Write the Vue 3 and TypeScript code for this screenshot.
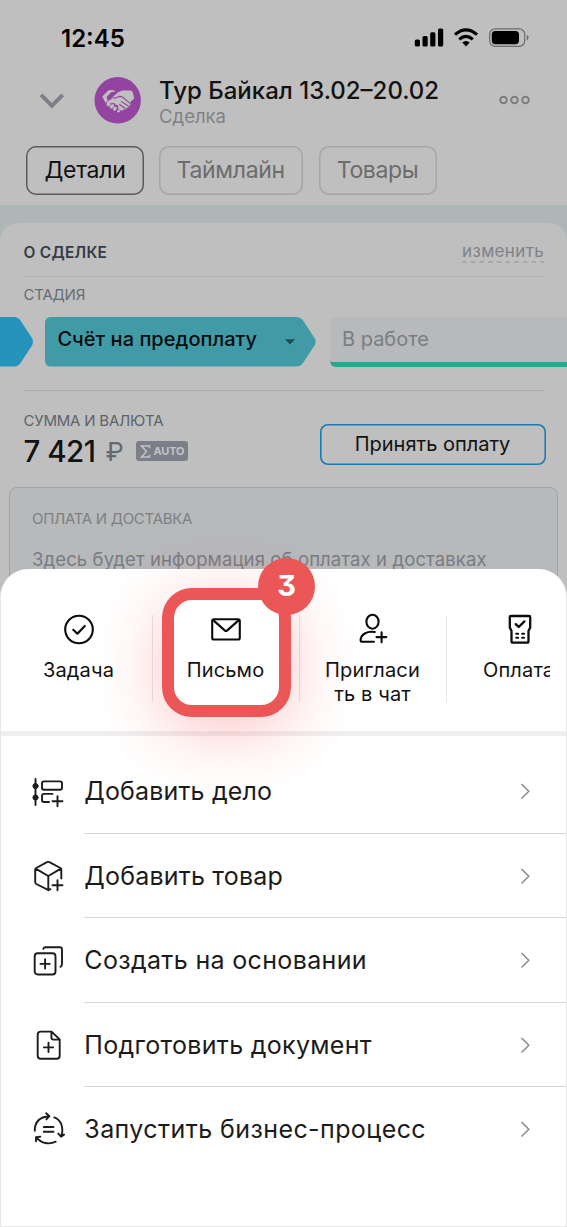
<script setup lang="ts">
interface Tab { label: string; cls: string }
interface Action { id: string; label: string; cls: string }
interface MenuRow { id: string; label: string; spacing: number }

const tabs: Tab[] = [
  { label: 'Детали', cls: 'tab-details' },
  { label: 'Таймлайн', cls: 'tab-timeline' },
  { label: 'Товары', cls: 'tab-goods' },
]

const actions: Action[] = [
  { id: 'task', label: 'Задача', cls: 'a-task' },
  { id: 'mail', label: 'Письмо', cls: 'a-mail' },
  { id: 'invite', label: 'Пригласи\nть в чат', cls: 'a-invite' },
  { id: 'pay', label: 'Оплата', cls: 'a-pay' },
]

const rows: MenuRow[] = [
  { id: 'todo', label: 'Добавить дело', spacing: 0.15 },
  { id: 'product', label: 'Добавить товар', spacing: 0.2 },
  { id: 'copy', label: 'Создать на основании', spacing: 0.34 },
  { id: 'doc', label: 'Подготовить документ', spacing: 0.3 },
  { id: 'process', label: 'Запустить бизнес-процесс', spacing: 0.42 },
]
</script>

<template>
  <div class="screen">
    <div class="status">
      <span class="time">12:45</span>
      <svg class="status-icons" width="118" height="24" viewBox="412 26 118 24">
        <g fill="#000">
          <rect x="414.8" y="39.5" width="5.2" height="7" rx="1.6" />
          <rect x="422.5" y="36" width="5.2" height="10.5" rx="1.6" />
          <rect x="430.2" y="32.3" width="5.2" height="14.2" rx="1.6" />
          <rect x="438" y="28.5" width="5.2" height="18" rx="1.6" />
          <path d="M466 46.4l-3.700-3.800q3.700-3.200 7.400 0z" />
        </g>
        <g fill="none" stroke="#000" stroke-width="3.100">
          <path d="M455 34.700q11-9.800 22 0" />
          <path d="M459.200 39.400q6.800-5.900 13.600 0" />
        </g>
        <rect x="489.700" y="28.900" width="35" height="17.400" rx="5.400" fill="none" stroke="#6c6c6c" stroke-width="1.200" />
        <rect x="491.800" y="31" width="27.200" height="13.200" rx="3.600" />
        <path d="M526.800 34.800q1.800.8 1.800 2.800t-1.800 2.800z" fill="#6c6c6c" />
      </svg>
    </div>

    <header class="head">
      <svg class="back" width="26" height="18" viewBox="0 0 26 18"><path d="M2 2.800l10.900 10.900L23.800 2.800" fill="none" stroke="#7c7f85" stroke-width="3.800" /></svg>
      <svg class="avatar" width="47" height="47" viewBox="94 77 47 47">
        <circle cx="117.700" cy="100.300" r="23.200" fill="#9343a0" />
        <path d="M108.500 90.200l4.600-.2 2.600 1.500-4.600.8-4.400 4.800 1 3.600-2 2.200-3.500-6.500z" fill="#bfbfbf" />
        <path d="M113 96.800l5-4.600 4.500-1.800 8.500.2 1.600 1.200 1.700 6.500-4.200 4.300c1 1.600.4 3.200-1.300 2.900.2 1.700-1 2.700-2.300 1.900 0 1.700-1.400 2.500-2.700 1.500-.4 1.800-2.200 2.300-4.300.7l-1.500-1c1-2.500-.5-4-2.400-3.700-.3-1.700-2-2.600-3.800-1.500-2-1.400-3.800-1-4.700 1.300l-.6-1.300 1.700-2.600 2.600-1.300z" fill="#bfbfbf" />
        <g fill="none" stroke="#9343a0" stroke-width="1.100" stroke-linecap="round">
          <path d="M113 97.800q2.600 1.200 5.600-1.400l3.600.4 7.600 6.300M121.300 101.600l6.700 4.200M119.600 104.500l5.300 3.700" />
        </g>
        <g fill="none" stroke="#bfbfbf" stroke-linecap="round">
          <path stroke-width="3.200" d="M108.200 104.700l.9-.9M111.300 106.800l1.300-1.200M114.500 109l.8-.8" />
          <path stroke-width="2.200" d="M118.200 111.400l.9-.8" />
        </g>
      </svg>
      <div class="titles">
        <h1 class="title">Тур Байкал 13.02–20.02</h1>
        <div class="subtitle">Сделка</div>
      </div>
      <svg class="more" width="34" height="12" viewBox="0 0 34 12"><g fill="none" stroke="#7b7c7e" stroke-width="1.900"><circle cx="5.500" cy="6" r="3.300" /><circle cx="16.500" cy="6" r="3.300" /><circle cx="27.500" cy="6" r="3.300" /></g></svg>
    </header>

    <nav class="tabs">
      <button v-for="t in tabs" :key="t.label" class="tab" :class="t.cls"><span>{{ t.label }}</span></button>
    </nav>

    <main class="body">
      <section class="card">
        <div class="card-head">
          <h2 class="card-title">О СДЕЛКЕ</h2>
          <a class="edit"><span>изменить</span>
            <svg width="82" height="2" viewBox="0 0 82 2"><path d="M0 1H82" stroke="#8e9196" stroke-width="1.200" stroke-dasharray="4.600 4.100" /></svg>
          </a>
        </div>
        <div class="label stage-label">СТАДИЯ</div>
        <div class="stages">
          <svg class="stage-prev" width="34" height="50" viewBox="0 0 34 50"><path d="M0 0H14Q18 0 20.500 3.500L32.300 21.500Q33.800 24.800 32.300 28L20.500 46Q18 49.600 14 49.600H0z" fill="#2693bb" /></svg>
          <div class="stage-current">
            <svg class="stage-shape" width="272" height="50" viewBox="0 0 272 50"><path d="M6 0H251Q255.500 0 258 3.500L269.800 21.500Q271.500 24.800 269.800 28L258 46Q255.500 49.600 251 49.600H6Q0 49.600 0 43.600V6Q0 0 6 0z" fill="#409ba7" /></svg>
            <span class="stage-text">Счёт на предоплату</span>
            <svg class="caret" width="10" height="6" viewBox="0 0 10 6"><path d="M0 .3H10L5 5.600z" fill="#1f4d53" /></svg>
          </div>
          <div class="stage-next"><span>В работе</span></div>
        </div>
        <div class="sum">
          <div class="sum-left">
            <div class="label sum-label">СУММА И ВАЛЮТА</div>
            <div class="amount">
              <span class="value">7 421</span><span class="cur">₽</span>
              <span class="auto"><svg width="11" height="13" viewBox="0 0 10 13"><path d="M9 3.200V1H1L6 6.500L1 12H9V9.800" fill="none" stroke="#c3c3c4" stroke-width="1.500" /></svg><b>AUTO</b></span>
            </div>
          </div>
          <button class="pay">Принять оплату</button>
        </div>
        <div class="delivery">
          <div class="delivery-title">ОПЛАТА И ДОСТАВКА</div>
          <div class="delivery-text">Здесь будет информация об оплатах и доставках</div>
        </div>
      </section>
    </main>

    <div class="sheet">
      <div class="actions">
        <div v-for="a in actions" :key="a.id" class="action" :class="a.cls">
          <svg width="34" height="34" viewBox="0 0 34 34" fill="none" stroke="#0b0b0b" stroke-width="2.100" stroke-linecap="round" stroke-linejoin="round">
            <template v-if="a.id === 'task'">
              <circle cx="17" cy="17.500" r="13.800" /><path d="M11.300 17.800l4.100 3.900 7.400-7.700" stroke-width="2.200" />
            </template>
            <template v-else-if="a.id === 'mail'">
              <rect x="3.200" y="7.300" width="27.600" height="20.200" rx="1.800" /><path d="M4.200 8.100l11.500 10.300q1.300 1.100 2.600 0L29.800 8.100" />
            </template>
            <template v-else-if="a.id === 'invite'">
              <ellipse cx="16.500" cy="9.700" rx="6.100" ry="7" /><path d="M18.800 20.100c-7-1.600-14 2-14.200 8.200q0 1.500 1.500 1.500H18M20.500 25.100H30.300M25.600 20.200V30.200" />
            </template>
            <template v-else>
              <path d="M8 4H26Q27.200 4 27.200 5.200V15.500L25.500 19V29.300Q25.500 30.700 24.100 30.700H9.900Q8.500 30.700 8.500 29.300V19L6.800 15.500V5.200Q6.800 4 8 4zM12.700 12.100l3 2.900 5.700-5.600" stroke-width="2.300" />
              <path d="M13.300 21.700h1.800M19.200 21.700h1.800M13.300 25.800h1.800M19.200 25.800h1.800" />
            </template>
          </svg>
          <span class="action-label">{{ a.label }}</span>
        </div>
        <div class="highlight"><span class="step">3</span></div>
      </div>

      <div class="rows">
        <div v-for="r in rows" :key="r.id" class="row">
          <svg class="row-icon" width="34" height="34" viewBox="0 0 34 34" fill="none" stroke="#1c1c1c" stroke-width="1.900" stroke-linecap="round" stroke-linejoin="round">
            <template v-if="r.id === 'todo'">
              <path d="M4.500 4V30" /><circle cx="4.500" cy="11" r="2.600" fill="#1c1c1c" stroke-width="1" /><circle cx="4.500" cy="22.500" r="2.600" fill="#1c1c1c" stroke-width="1" />
              <rect x="11" y="6.400" width="20" height="8.400" rx="2" /><path d="M21.500 18.900H13Q11 18.900 11 20.900V25Q11 27 13 27H18M21.500 26.200H31.500M26.500 21.200V31.200" />
            </template>
            <template v-else-if="r.id === 'product'">
              <path d="M17.500 31.200L5.300 25Q4.200 24.400 4.200 23.100V10.700Q4.200 9.600 5.200 9L16 3.200Q17.200 2.600 18.400 3.200L29.400 9Q30.300 9.600 30.300 10.700V19.500M4.700 9.600L17.300 17L29.900 9.600M17.300 17V31.200L19.500 30.200M21.500 26.200H31.500M26.500 21.200V31.200" />
            </template>
            <template v-else-if="r.id === 'copy'">
              <rect x="3.700" y="9.300" width="20.800" height="21.200" rx="3" /><path d="M12.300 4.900Q12.800 3.300 14.500 3.300H28.700Q31 3.300 31 5.600V20Q31 22 29.500 22.800M14.100 15.300V24.500M9.500 19.900H18.700" />
            </template>
            <template v-else-if="r.id === 'doc'">
              <path d="M20.500 3.600H9.700Q6.700 3.600 6.700 6.600V27.800Q6.700 30.800 9.700 30.800H25.700Q28.700 30.800 28.700 27.800V11.400zM20.400 3.900V9.600Q20.400 11.600 22.400 11.600H28.200M17.500 14.800V24M12.900 19.400H22.100" />
            </template>
            <template v-else>
              <path d="M3.800 18.700Q3.600 5.300 18.300 4.200M15.200 1.200L18.400 4.200L15.400 7.300M23.300 5.400C30 8 33 15.500 30.400 24M27.400 21.600L30 24.700L33 22.600M24.700 29.700C18 33 10.500 31.400 5.300 25.300M5 29.300V25.100L9.300 24.700M12.800 15H22.500M12.800 19.700H22.500" />
            </template>
          </svg>
          <div class="row-main">
            <span class="row-label" :style="{ letterSpacing: r.spacing + 'px' }">{{ r.label }}</span>
            <svg class="chev" width="12" height="18" viewBox="0 0 12 18"><path d="M1.500 2L8.800 9.200L1.500 16.400" fill="none" stroke="#858585" stroke-width="1.400" /></svg>
          </div>
        </div>
      </div>
    </div>
  </div>
</template>

<style>
html, body { margin: 0; background: #bfbfbf; }
</style>

<style scoped>
.screen { position: relative; width: 567px; height: 1227px; overflow: hidden; background: #bfbfbf; font-family: Inter, "Liberation Sans", sans-serif; box-sizing: border-box; }
.screen * { box-sizing: border-box; }
span, h1, h2 { white-space: pre; }
svg { display: block; flex: none; }
button { font-family: inherit; background: none; padding: 0; margin: 0; border: 0; }
.status { height: 75px; display: flex; justify-content: space-between; align-items: center; padding: 0 37px 0 61px; }
.time { font-size: 24px; font-weight: 600; padding-top: 1px; }
.status-icons { margin-top: 1px; }
.head { height: 70px; display: flex; align-items: flex-start; }
.back { margin: 17px 0 0 39px; }
.avatar { margin: 2px 0 0 29px; }
.titles { margin: 1.500px 0 0 18px; flex: 1; }
.title { margin: 0; font-size: 24px; line-height: 28px; font-weight: 500; color: #121212; }
.subtitle { font-size: 18.500px; line-height: 22px; color: #7f8288; }
.more { margin: 19px 35px 0 0; }
.tabs { height: 60px; display: flex; padding: 0.500px 0 0 26px; align-items: flex-start; }
.tab { height: 49px; box-shadow: inset 0 0 0 1.500px #a5a5a5; border-radius: 10px; font-size: 23px; letter-spacing: -.3px; color: #6c6c6c; margin-right: 15.500px; display: flex; align-items: center; justify-content: center; }
.tab-details { width: 118px; box-shadow: inset 0 0 0 1.500px #5a5a5a; color: #121212; margin-right: 14.500px; }
.tab-timeline { width: 144.500px; }
.tab-goods { width: 118px; letter-spacing: -.4px; }
.body { background: #b0b5b7; padding-top: 17.500px; }
.card { background: #bfbfbf; border-radius: 18px 18px 0 0; height: 400px; }
.card-head { height: 54px; margin: 0 23px 0 23.500px; border-bottom: 1px solid #adafb0; display: flex; justify-content: space-between; }
.card-title { margin: 0; font-size: 15.500px; line-height: 59px; font-weight: 600; color: #353b47; letter-spacing: .25px; }
.edit { width: 82px; font-size: 17px; line-height: 20px; letter-spacing: .35px; color: #7f8289; margin-top: 18.500px; }
.edit span { display: block; }
.label { font-size: 15px; line-height: 18px; color: #5c636b; letter-spacing: -.22px; }
.stage-label { margin: 9px 0 0 23.500px; color: #686d73; }
.stages { margin-top: 13.500px; height: 50px; display: flex; }
.stage-current { position: relative; width: 272px; margin-left: 11.400px; display: flex; align-items: flex-start; }
.stage-shape { position: absolute; left: 0; top: 0; }
.stage-text { position: relative; width: 239.500px; padding-left: 12px; font-size: 20px; line-height: 45px; font-weight: 500; letter-spacing: .03px; color: #050c0d; }
.caret { position: relative; margin-top: 22px; }
.stage-next { flex: 1; margin-left: 12.600px; padding-left: 12px; background: #b7b9bb; border-bottom: 5px solid #31a58c; border-radius: 6px 0 0 6px; font-size: 20px; line-height: 45px; color: #7b7d83; }
.sum { margin: 23px 23px 0 23.500px; border-top: 1.500px solid #acadae; height: 97px; display: flex; justify-content: space-between; }
.sum-label { margin-top: 21px; }
.amount { display: flex; align-items: center; height: 42px; }
.value { width: 82px; font-size: 29.500px; font-weight: 500; letter-spacing: -.5px; color: #121212; }
.cur { width: 30px; font-size: 26px; color: #5f6a74; }
.auto { width: 52.500px; height: 20.500px; background: #7c7f87; border-radius: 3px; display: flex; align-items: center; padding-left: 4px; color: #c3c3c4; font-size: 11px; }
.auto b { margin-left: 3px; font-weight: 700; letter-spacing: -.2px; }
.pay { width: 226px; height: 41px; margin: 32.500px -1.500px 0 0; box-shadow: inset 0 0 0 1.600px #177cb3; border-radius: 8px; font-size: 20px; color: #121212; }
.delivery { margin: 0 9px; height: 120px; border: 1.500px solid #a0a3a6; border-radius: 8px; background: #b7b9bb; padding: 21px 0 0 22px; white-space: nowrap; }
.delivery-title { font-size: 15px; line-height: 20px; letter-spacing: -.3px; color: #7d8084; }
.delivery-text { font-size: 18.500px; line-height: 24px; letter-spacing: .11px; margin-top: 18px; color: #7a7c83; }

.sheet { position: absolute; left: 0; top: 569px; width: 567px; height: 658px; background: #fff; border: 1px solid #e7e7e7; border-top: 0; border-radius: 28px 28px 0 0; }
.actions { position: relative; height: 166.500px; border-bottom: 5.500px solid #efeff0; display: flex; padding: 43px 16px 0 4px; }
.action { width: 147px; flex: none; display: flex; flex-direction: column; align-items: center; position: relative; height: 90px; }
.action::after { content: ""; position: absolute; right: -1px; top: 3px; height: 87px; width: 1.500px; background: #e7e7e9; }
.action-label { margin-top: 11.500px; font-size: 20px; line-height: 24px; letter-spacing: .15px; text-align: center; color: #121212; }
.a-pay { width: 103.500px; align-items: flex-start; overflow: hidden; }
.a-pay svg { margin-left: 56.500px; }
.a-pay .action-label { margin-left: 37px; }
.a-pay::after { display: none; }
.highlight { position: absolute; left: 161px; top: 19px; width: 129px; height: 129px; border: 12px solid #eb5757; border-radius: 30px; box-shadow: 0 14px 66px rgba(255, 60, 60, .3); z-index: 2; }
.step { position: absolute; left: 84px; top: -42px; width: 57px; height: 57px; border-radius: 50%; background: #eb5757; color: #fff; font-size: 29px; line-height: 56px; font-weight: 700; text-align: center; font-feature-settings: "cv09"; }
.rows { padding-top: 14.300px; }
.row { height: 84.350px; display: flex; align-items: center; padding-left: 30px; }
.row-main { flex: 1; margin-left: 19.300px; height: 84.350px; border-bottom: 1.500px solid #d6d6d8; display: flex; align-items: center; justify-content: space-between; padding-right: 34px; }
.row:last-child .row-main { border-bottom: 0; }
.row-label { font-size: 25px; line-height: 30px; color: #1b1b1b; }
</style>
